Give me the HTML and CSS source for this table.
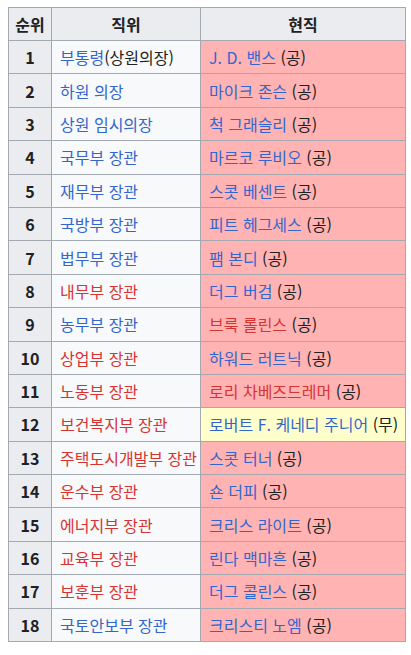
FILE: index.html
```html
<!DOCTYPE html>
<html lang="ko">
<head>
<meta charset="utf-8">
<link rel="stylesheet" href="styles.css">
</head>
<body>
<table class="wikitable">
  <thead>
    <tr class="head"><th class="c1">순위</th><th class="c2">직위</th><th class="c3">현직</th></tr>
  </thead>
  <tbody>
    <tr><th>1</th><td><a class="b">부통령</a>(상원의장)</td><td class="r"><a class="b">J. D. 밴스</a> (공)</td></tr>
    <tr><th>2</th><td><a class="b">하원 의장</a></td><td class="r"><a class="b">마이크 존슨</a> (공)</td></tr>
    <tr><th>3</th><td><a class="b">상원 임시의장</a></td><td class="r"><a class="b">척 그래슬리</a> (공)</td></tr>
    <tr><th>4</th><td><a class="b">국무부 장관</a></td><td class="r"><a class="b">마르코 루비오</a> (공)</td></tr>
    <tr><th>5</th><td><a class="b">재무부 장관</a></td><td class="r"><a class="b">스콧 베센트</a> (공)</td></tr>
    <tr><th>6</th><td><a class="b">국방부 장관</a></td><td class="r"><a class="b">피트 헤그세스</a> (공)</td></tr>
    <tr><th>7</th><td><a class="b">법무부 장관</a></td><td class="r"><a class="b">팸 본디</a> (공)</td></tr>
    <tr><th>8</th><td><a class="n">내무부 장관</a></td><td class="r"><a class="b">더그 버검</a> (공)</td></tr>
    <tr><th>9</th><td><a class="b">농무부 장관</a></td><td class="r"><a class="n">브룩 롤린스</a> (공)</td></tr>
    <tr><th>10</th><td><a class="n">상업부 장관</a></td><td class="r"><a class="b">하워드 러트닉</a> (공)</td></tr>
    <tr><th>11</th><td><a class="n">노동부 장관</a></td><td class="r"><a class="n">로리 차베즈드레머</a> (공)</td></tr>
    <tr><th>12</th><td><a class="n">보건복지부 장관</a></td><td class="y"><a class="b">로버트 F. 케네디 주니어</a> (무)</td></tr>
    <tr><th>13</th><td><a class="n">주택도시개발부 장관</a></td><td class="r"><a class="b">스콧 터너</a> (공)</td></tr>
    <tr><th>14</th><td><a class="n">운수부 장관</a></td><td class="r"><a class="b">숀 더피</a> (공)</td></tr>
    <tr><th>15</th><td><a class="n">에너지부 장관</a></td><td class="r"><a class="b">크리스 라이트</a> (공)</td></tr>
    <tr><th>16</th><td><a class="n">교육부 장관</a></td><td class="r"><a class="b">린다 맥마흔</a> (공)</td></tr>
    <tr><th>17</th><td><a class="n">보훈부 장관</a></td><td class="r"><a class="b">더그 콜린스</a> (공)</td></tr>
    <tr><th>18</th><td><a class="b">국토안보부 장관</a></td><td class="r"><a class="b">크리스티 노엠</a> (공)</td></tr>
  </tbody>
</table>
</body>
</html>
```
FILE: styles.css
```css
html, body {
  margin: 0;
  padding: 0;
  background: #ffffff;
}
body {
  padding: 7px 0 0 8px;
  font-family: "Noto Sans CJK KR", "Noto Sans", sans-serif;
  font-size: 16px;
  color: #202122;
}
.wikitable {
  border-collapse: collapse;
  background: #f8f9fa;
  border: 1px solid #a2a9b1;
  table-layout: fixed;
  width: 397px;
}
.wikitable tbody tr {
  height: 33.4px;
}
.wikitable tr.head {
  height: 33px;
}
.wikitable th,
.wikitable td {
  box-sizing: border-box;
  border: 1px solid #a2a9b1;
  padding: 0 8px;
  line-height: 20px;
  vertical-align: middle;
  white-space: nowrap;
}
.wikitable th {
  background: #eaecf0;
  font-weight: bold;
  text-align: center;
  padding: 0 4px;
}
.wikitable td {
  text-align: left;
}
.c1 { width: 43px; }
.c2 { width: 149px; }
.c3 { width: 205px; }
.r { background: #ffb3b3; }
.y { background: #ffffcc; }
a.b { color: #3366cc; }
a.n { color: #d73333; }
```
